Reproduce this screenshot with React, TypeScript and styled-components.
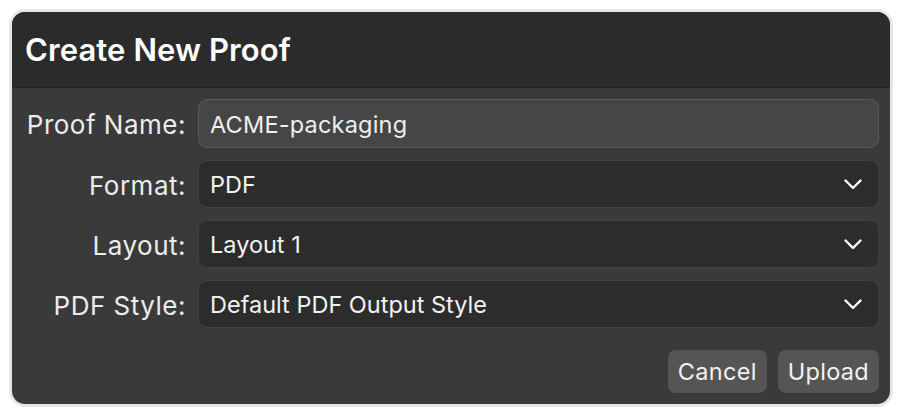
import React from "react";
import styled, { createGlobalStyle } from "styled-components";

const Global = createGlobalStyle`
  html, body { margin: 0; padding: 0; background: #ffffff; }
  body { font-family: Inter, "Noto Sans", sans-serif; -webkit-font-smoothing: antialiased; }
`;

const Page = styled.div`
  padding: 9px 7px 5px 9px;
  width: 900px;
  height: 412px;
  box-sizing: border-box;
`;

const Frame = styled.div`
  height: 100%;
  box-sizing: border-box;
  border: 3px solid #e6e6e6;
  border-radius: 16px;
  background: #3a3a3a;
  overflow: hidden;
  display: flex;
  flex-direction: column;
`;

const Header = styled.div`
  height: 76px;
  background: #2b2b2b;
  border-bottom: 1px solid #232323;
  display: flex;
  align-items: center;
  padding: 0 0 0 13px;
  box-sizing: border-box;
`;

const Title = styled.h1`
  margin: 0;
  color: #ffffff;
  font-size: 31px;
  font-weight: 600;
  letter-spacing: 0.1px;
`;

const Body = styled.div`
  flex: 1;
  display: flex;
  flex-direction: column;
  padding: 11px 11px 11px 12px;
`;

const Form = styled.div`
  display: grid;
  grid-template-columns: 162px 1fr;
  column-gap: 12px;
  row-gap: 12px;
  align-items: center;
`;

const Label = styled.label`
  text-align: right;
  color: #ececec;
  font-size: 26px;
  letter-spacing: 0.5px;
  font-weight: 400;
  white-space: nowrap;
  padding-top: 2px;
`;

const TextField = styled.div`
  height: 49px;
  box-sizing: border-box;
  border: 1.5px solid #595959;
  background: #464646;
  border-radius: 9px;
  display: flex;
  align-items: center;
  padding: 1px 11px 0;
  color: #efefef;
  font-size: 23.5px;
  letter-spacing: 0.2px;
`;

const Select = styled.div`
  height: 48px;
  box-sizing: border-box;
  border: 1.5px solid #414141;
  background: #2c2c2c;
  border-radius: 9px;
  display: flex;
  align-items: center;
  justify-content: space-between;
  padding: 0 16px 0 11px;
  color: #f2f2f2;
  font-size: 23.5px;
`;

const Footer = styled.div`
  margin-top: auto;
  display: flex;
  justify-content: flex-end;
  gap: 11px;
`;

const Button = styled.button`
  height: 43px;
  border: none;
  border-radius: 8px;
  background: #555555;
  color: #f2f2f2;
  font-family: inherit;
  font-size: 23.5px;
  letter-spacing: 0.3px;
  padding: 0 10px;
  cursor: pointer;
`;

const Chevron = () => (
  <svg width="18" height="11" viewBox="0 0 18 11" fill="none">
    <path d="M1.5 1.5 L9 9 L16.5 1.5" stroke="#ffffff" strokeWidth="2.4" strokeLinecap="round" strokeLinejoin="round" />
  </svg>
);

const selects = [
  { label: "Format:", value: "PDF" },
  { label: "Layout:", value: "Layout 1" },
  { label: "PDF Style:", value: "Default PDF Output Style" },
];

export default function App() {
  return (
    <Page>
      <Global />
      <Frame>
        <Header>
          <Title>Create New Proof</Title>
        </Header>
        <Body>
          <Form>
            <Label>Proof Name:</Label>
            <TextField>ACME-packaging</TextField>
            {selects.map((s) => (
              <React.Fragment key={s.label}>
                <Label>{s.label}</Label>
                <Select>
                  <span>{s.value}</span>
                  <Chevron />
                </Select>
              </React.Fragment>
            ))}
          </Form>
          <Footer>
            <Button>Cancel</Button>
            <Button>Upload</Button>
          </Footer>
        </Body>
      </Frame>
    </Page>
  );
}
